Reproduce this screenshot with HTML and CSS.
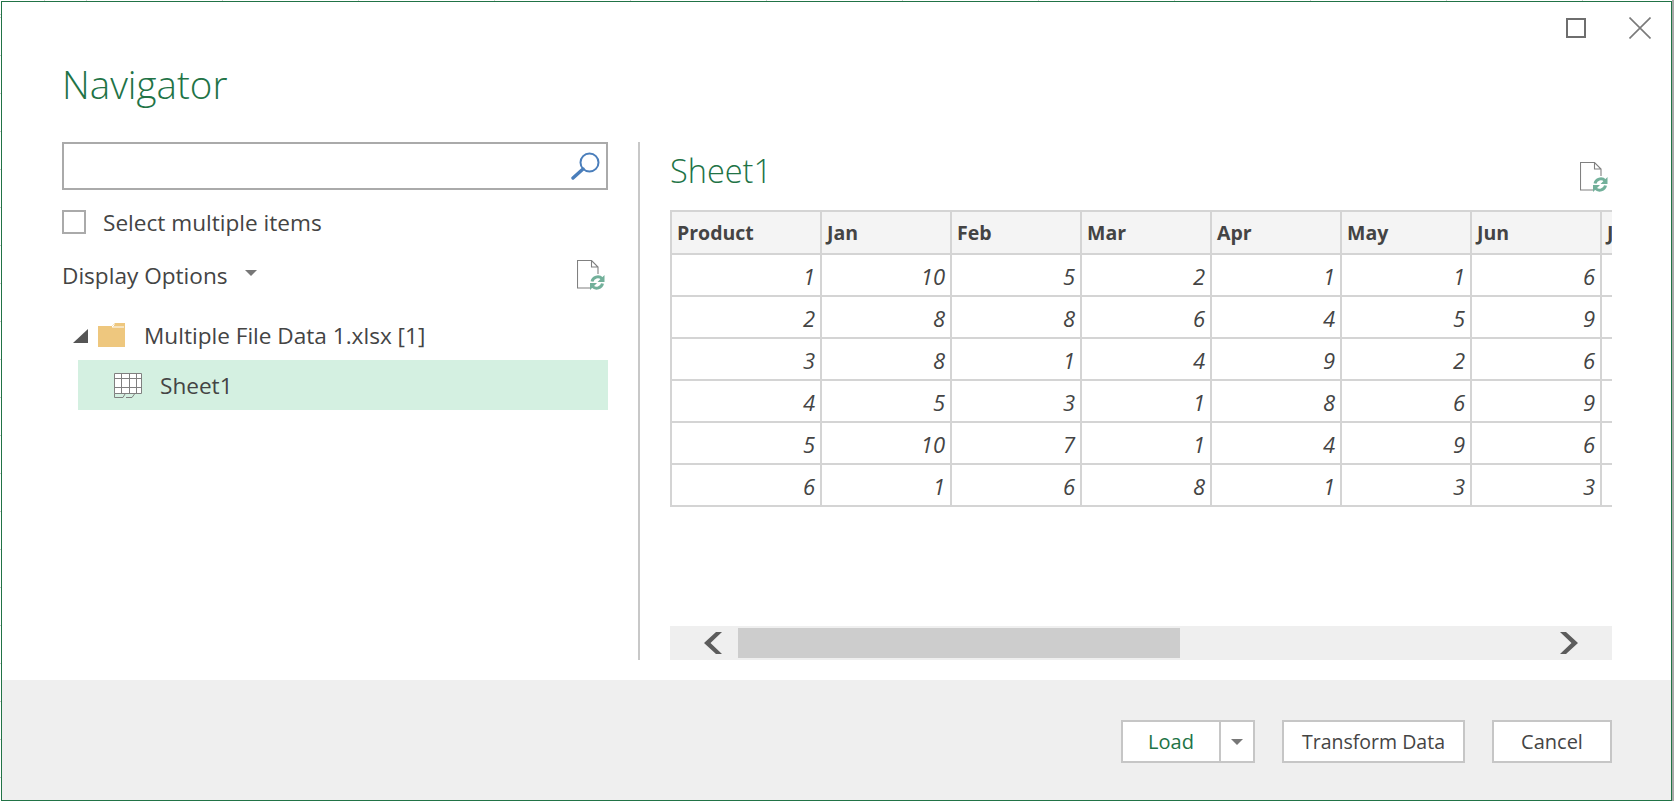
FILE: index.html
```html
<!DOCTYPE html>
<html lang="en">
<head>
  <meta charset="UTF-8">
  <meta name="viewport" content="width=device-width, initial-scale=1.0">
  <title>Navigator</title>
  <link rel="stylesheet" href="styles.css">
</head>
<body>
  <div class="dialog">
    <div class="window-buttons">
      <svg class="icon-max" width="20" height="20" viewBox="0 0 20 20"><rect x="1" y="1" width="18" height="18" fill="none" stroke="#6e6e6e" stroke-width="2"/></svg>
      <svg class="icon-close" width="22" height="22" viewBox="0 0 22 22"><path d="M0.5 0.5L21.5 21.5M21.5 0.5L0.5 21.5" fill="none" stroke="#7a7a7a" stroke-width="1.6"/></svg>
    </div>

    <div class="main">
      <div class="left-pane">
        <h1>Navigator</h1>
        <div class="search-box">
          <svg width="30" height="28" viewBox="0 0 30 28"><circle cx="18.5" cy="10.5" r="9" fill="none" stroke="#4a7ebb" stroke-width="2"/><path d="M12 17L2 26" fill="none" stroke="#4a7ebb" stroke-width="3.4" stroke-linecap="round"/></svg>
        </div>
        <label class="check-row">
          <span class="checkbox"></span>
          <span>Select multiple items</span>
        </label>
        <div class="options-row">
          <span>Display Options</span>
          <span class="small-arrow"></span>
          <svg class="refresh" width="28" height="30" viewBox="0 0 28 30"><path d="M21 14V7L14.500 0.500H0.500V28H13M14.500 0.500V7H21" fill="none" stroke="#808080" stroke-width="1.100"/><path d="M15 21.500A6 6 0 0 1 25 18.500M25.500 23.500A6 6 0 0 1 15.500 26.500" fill="none" stroke="#72b09a" stroke-width="3"/><path d="M27.500 15V22H20.500ZM13 30V23H20Z" fill="#72b09a"/></svg>
        </div>
        <div class="tree">
          <div class="tree-file">
            <span class="expand-arrow"></span>
            <svg class="folder" width="27" height="24" viewBox="0 0 27 24"><path d="M0 3H14L17 0H27V24H0Z" fill="#eec77e"/><path d="M16.500 1.500L14 4H26" fill="none" stroke="#fff" stroke-width="1"/></svg>
            <span class="file-name">Multiple File Data 1.xlsx [1]</span>
          </div>
          <div class="tree-sheet">
            <svg width="28" height="25" viewBox="0 0 28 25"><path d="M0.500 0.500H27.500V20.500H0.500ZM0.500 5.500H27.500M0.500 14.500H27.500M7.500 0.500V20.500M15.500 0.500V20.500M22.500 0.500V20.500" fill="#fff" stroke="#808080" stroke-width="1"/><path d="M0.500 20.500V24.500H9L11 21M12 24.500H18L20.500 21" fill="none" stroke="#808080" stroke-width="1"/></svg>
            <span>Sheet1</span>
          </div>
        </div>
      </div>

      <div class="right-pane">
        <div class="preview-head">
          <h2>Sheet1</h2>
          <svg class="refresh" width="28" height="30" viewBox="0 0 28 30"><path d="M21 14V7L14.500 0.500H0.500V28H13M14.500 0.500V7H21" fill="none" stroke="#808080" stroke-width="1.100"/><path d="M15 21.500A6 6 0 0 1 25 18.500M25.500 23.500A6 6 0 0 1 15.500 26.500" fill="none" stroke="#72b09a" stroke-width="3"/><path d="M27.500 15V22H20.500ZM13 30V23H20Z" fill="#72b09a"/></svg>
        </div>
        <div class="table-wrap">
          <table>
            <thead>
              <tr><th>Product</th><th>Jan</th><th>Feb</th><th>Mar</th><th>Apr</th><th>May</th><th>Jun</th><th>Jul</th></tr>
            </thead>
            <tbody>
              <tr><td>1</td><td>10</td><td>5</td><td>2</td><td>1</td><td>1</td><td>6</td><td></td></tr>
              <tr><td>2</td><td>8</td><td>8</td><td>6</td><td>4</td><td>5</td><td>9</td><td></td></tr>
              <tr><td>3</td><td>8</td><td>1</td><td>4</td><td>9</td><td>2</td><td>6</td><td></td></tr>
              <tr><td>4</td><td>5</td><td>3</td><td>1</td><td>8</td><td>6</td><td>9</td><td></td></tr>
              <tr><td>5</td><td>10</td><td>7</td><td>1</td><td>4</td><td>9</td><td>6</td><td></td></tr>
              <tr><td>6</td><td>1</td><td>6</td><td>8</td><td>1</td><td>3</td><td>3</td><td></td></tr>
            </tbody>
          </table>
        </div>
        <div class="scrollbar">
          <svg class="chev-left" width="18" height="22" viewBox="0 0 18 22"><path d="M12 0H18L6.500 11L18 22H12L0 11Z" fill="#5c5c5c"/></svg>
          <div class="thumb"></div>
          <svg class="chev-right" width="18" height="22" viewBox="0 0 18 22"><path d="M0 0H6L18 11L6 22H0L11.500 11Z" fill="#5c5c5c"/></svg>
        </div>
      </div>
    </div>

    <div class="footer">
      <div class="split-button">
        <button class="load">Load</button>
        <button class="load-arrow"><span class="small-arrow"></span></button>
      </div>
      <button class="transform">Transform Data</button>
      <button class="cancel">Cancel</button>
    </div>
  </div>
</body>
</html>
```

FILE: styles.css
```css
html, body {
  height: 100%;
}
body {
  margin: 0;
  overflow: hidden;
  box-sizing: border-box;
  padding: 1px 0 0 1px;
  border-right: 2px solid #a8a8a8;
  font-family: "Open Sans", "Noto Sans", Arial, sans-serif;
  font-size: 22.6px;
  color: #444;
  background-color: white;
  /* bits of the sheet behind the dialog */
  background-image:
    repeating-linear-gradient(90deg, #d4d4d4 0 1px, transparent 1px 136px),
    repeating-linear-gradient(180deg, #c8c8c8 0 1px, transparent 1px 38px);
  background-position: 86px 0, 0 17px;
}
.dialog {
  height: 100%;
  box-sizing: border-box;
  display: flex;
  flex-direction: column;
  background-color: white;
  border: 1px solid #217346;
}
.window-buttons {
  height: 0;
  display: flex;
  justify-content: flex-end;
  align-items: flex-start;
  gap: 43px;
  padding-right: 20px;
}
.icon-max {
  margin-top: 16px;
}
.icon-close {
  margin-top: 15px;
}
.main {
  flex: 1;
  display: flex;
  padding-left: 60px;
}
.left-pane {
  width: 546px;
  padding-top: 60px;
}
h1 {
  margin: 0;
  height: 80px;
  font-size: 38.5px;
  line-height: 44px;
  font-weight: 300;
  color: #217346;
}
.search-box {
  height: 44px;
  border: 2px solid #aaa;
  display: flex;
  justify-content: flex-end;
  align-items: center;
  padding-right: 5px;
}
.check-row {
  display: flex;
  align-items: center;
  gap: 17px;
  height: 24px;
  margin-top: 20px;
}
.checkbox {
  width: 20px;
  height: 20px;
  border: 2px solid #aaa;
}
.options-row {
  display: flex;
  align-items: center;
  margin-top: 26px;
  height: 30px;
}
.options-row .refresh {
  margin-left: auto;
  margin-right: 3px;
}
.small-arrow {
  display: block;
  width: 0;
  height: 0;
  border-left: 6px solid transparent;
  border-right: 6px solid transparent;
  border-top: 6px solid #777;
}
.options-row .small-arrow {
  margin-left: 17px;
  margin-bottom: 4px;
}
.tree {
  margin-top: 33px;
}
.tree-file {
  display: flex;
  align-items: center;
  height: 24px;
  padding-left: 11px;
}
.expand-arrow {
  width: 0;
  height: 0;
  border-left: 15px solid transparent;
  border-bottom: 14px solid #555;
  margin-top: 2px;
}
.folder {
  margin-left: 10px;
  margin-right: 19px;
}
.file-name {
  margin-top: 1px;
}
.tree-sheet {
  display: flex;
  align-items: center;
  gap: 18px;
  height: 50px;
  margin: 13px 0 0 16px;
  padding-left: 36px;
  background-color: #d4f0e1;
}
.right-pane {
  margin-left: 30px;
  width: 974px;
  box-sizing: border-box;
  margin-top: 140px;
  height: 518px;
  border-left: 2px solid #c8c8c8;
  padding-left: 30px;
}
.preview-head {
  display: flex;
  justify-content: space-between;
  height: 68px;
}
h2 {
  margin: 0;
  font-size: 32.5px;
  line-height: 58px;
  font-weight: 300;
  color: #217346;
}
.preview-head .refresh {
  margin-top: 20px;
  margin-right: 4px;
}
.table-wrap {
  width: 942px;
  height: 416px;
  overflow: hidden;
}
table {
  border-collapse: collapse;
  table-layout: fixed;
  width: 1060px;
}
th, td {
  box-sizing: border-box;
  border: 2px solid #d4d4d4;
  width: 130px;
  padding: 0 5px;
  overflow: hidden;
  white-space: nowrap;
}
th:first-child {
  width: 150px;
}
th {
  height: 43px;
  text-align: left;
  font-size: 19.5px;
  font-weight: 700;
  background-color: #f4f4f4;
}
td {
  height: 42px;
  padding-top: 1px;
  text-align: right;
  font-style: italic;
  font-size: 22px;
}
.scrollbar {
  height: 30px;
  padding: 2px 0;
  display: flex;
  align-items: center;
  background-color: #efefef;
}
.thumb {
  width: 442px;
  height: 30px;
  margin-left: 16px;
  background-color: #cdcdcd;
}
.chev-left {
  margin-left: 34px;
}
.chev-right {
  margin-left: 380px;
}
.footer {
  height: 120px;
  box-sizing: border-box;
  display: flex;
  justify-content: flex-end;
  align-items: flex-start;
  gap: 28px;
  padding: 40px 59px 0 0;
  background-color: #efefef;
}
button {
  height: 43px;
  padding: 0;
  background-color: white;
  border: 2px solid #c6c6c6;
  font-family: inherit;
  font-size: 20px;
  color: #444;
}
.split-button {
  display: flex;
  margin-right: -1px;
}
.load {
  width: 100px;
  color: #217346;
}
.load-arrow {
  width: 34px;
  border-left: none;
  display: flex;
  justify-content: center;
  align-items: center;
}
.transform {
  width: 183px;
  font-size: 19.5px;
}
.cancel {
  width: 120px;
  margin-left: -1px;
}
```
